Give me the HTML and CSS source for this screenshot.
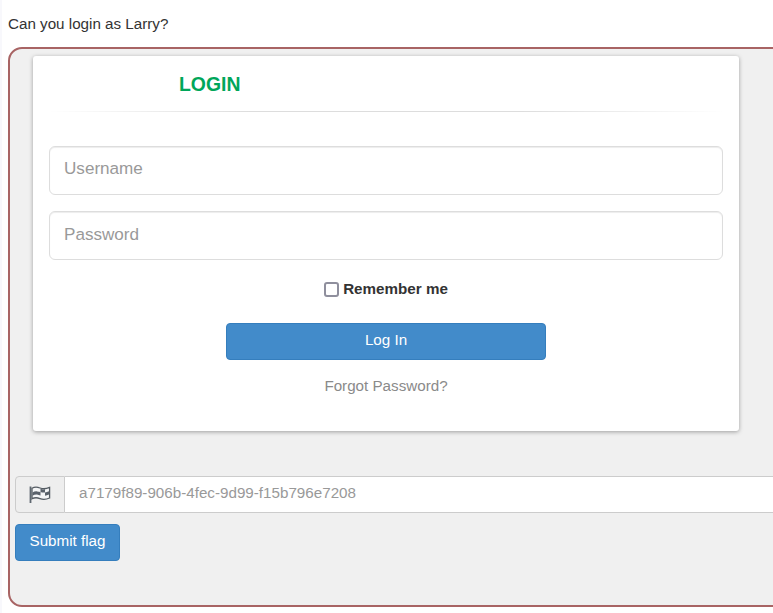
FILE: index.html
```html
<!DOCTYPE html>
<html lang="en">

<head>
    <meta charset="UTF-8">
    <meta name="viewport" content="width=device-width, initial-scale=1.0">
    <title>Can you login as Larry?</title>
    <link rel="stylesheet" href="styles.css">
</head>

<body>
    <p class="question">Can you login as Larry?</p>

    <div class="challenge">
        <div class="card">
            <div class="card-head">
                <h2 class="card-title">LOGIN</h2>
            </div>
            <form class="login-form">
                <input class="field" type="text" placeholder="Username">
                <input class="field field-password" type="password" placeholder="Password">
                <label class="remember"><span class="check"></span>Remember me</label>
                <button class="btn btn-login" type="button">Log In</button>
                <a class="forgot" href="#">Forgot Password?</a>
            </form>
        </div>

        <div class="flag-group">
            <span class="flag-addon">
                <svg class="flag-icon" viewBox="0 0 22 17" width="22" height="17">
                    <rect x="0.6" y="0.5" width="1.8" height="16.5" fill="#5f6870"></rect>
                    <path d="M3 2.2 C6 0.6 8.5 1 11 2 C14 3.2 17 3 20.6 1.4 L20.6 12 C17 13.6 14 13.8 11 12.6 C8.5 11.6 6 11.2 3 12.8 Z" fill="#f4f5f6" stroke="#555c63" stroke-width="1.3"></path>
                    <path d="M3.5 6.6 C5 5.6 6.5 5.2 8 5.4 L8 8.6 C6.5 8.4 5 8.8 3.5 9.8 Z M11.5 2.8 C13 3.4 14.5 3.5 16 3.3 L16 6.5 C14.5 6.7 13 6.6 11.5 6 Z M16 6.5 C17.3 6.3 18.7 5.8 20 5.2 L20 8.4 C18.7 9 17.3 9.5 16 9.7 Z M8 8.6 C9 8.8 10.3 9.2 11.5 9.6 L11.5 6 C10.3 5.6 9 5.4 8 5.4 Z" fill="#59616a"></path>
                </svg>
            </span>
            <input class="flag-input" type="text" placeholder="a7179f89-906b-4fec-9d99-f15b796e7208">
        </div>
        <button class="btn btn-submit" type="button">Submit flag</button>
    </div>
</body>

</html>
```
FILE: styles.css
```css
html,
body {
    height: 100%;
}

html {
    background-color: #f8f8fc;
}

body {
    margin: 0 0 0 2px;
    font-family: "Liberation Sans", Arial, sans-serif;
    font-size: 15.2px;
    line-height: 20px;
    color: #333;
    background-color: #fff;
    overflow: hidden;
}

.question {
    margin: 0;
    padding: 14px 0 13px 6px;
}

.challenge {
    box-sizing: border-box;
    width: 860px;
    height: 560px;
    margin-left: 6px;
    padding: 7px 5px 0;
    border: 2px solid #a86464;
    border-radius: 14px;
    background-color: #f0f0f0;
}

/* Login card */
.card {
    box-sizing: border-box;
    width: 706px;
    height: 375px;
    margin-left: 18px;
    border-radius: 3px;
    background-color: #fff;
    box-shadow: 0 1px 4px rgba(0, 0, 0, 0.35);
}

.card-head {
    height: 55px;
    margin: 0 16px;
    border-bottom: 1px solid;
    border-image: linear-gradient(to right, #fff, #ddd 30%, #ddd 70%, #fff) 1;
}

.card-title {
    margin: 0;
    padding: 16px 0 0 130px;
    font-size: 19.4px;
    line-height: 24px;
    font-weight: bold;
    color: #00a65a;
}

.login-form {
    display: flex;
    flex-direction: column;
    align-items: center;
    padding: 34px 16px 0;
}

.field {
    box-sizing: border-box;
    width: 100%;
    height: 49px;
    margin-bottom: 16px;
    padding: 0 14px 3px;
    border: 1px solid #ddd;
    border-radius: 6px;
    font-family: inherit;
    font-size: 17.1px;
    color: #555;
    box-shadow: inset 0 1px 1px rgba(0, 0, 0, 0.075);
}

.field-password {
    padding-bottom: 1px;
}

.field::placeholder,
.flag-input::placeholder {
    color: #999;
    opacity: 1;
}

.remember {
    display: flex;
    align-items: center;
    gap: 4px;
    margin: 2px 0 23px;
    font-size: 15.2px;
    line-height: 22px;
    font-weight: bold;
}

.check {
    box-sizing: border-box;
    width: 15px;
    height: 15px;
    border: 2px solid #8f8f9d;
    border-radius: 3px;
    background-color: #fff;
}

.btn {
    display: block;
    box-sizing: border-box;
    height: 37px;
    padding: 0 0 5px;
    border: 1px solid #357ebd;
    border-radius: 4px;
    background-color: #428bca;
    font-family: inherit;
    font-size: 15.2px;
    color: #fff;
}

.btn-login {
    width: 320px;
    margin-bottom: 15px;
}

.forgot {
    font-size: 15.2px;
    line-height: 22px;
    color: #8a8a8a;
    text-decoration: none;
}

/* Flag form */
.flag-group {
    display: flex;
    height: 37px;
    margin-top: 45px;
    margin-bottom: 11px;
}

.flag-addon {
    box-sizing: border-box;
    display: flex;
    align-items: center;
    justify-content: center;
    width: 50px;
    border: 1px solid #ccc;
    border-radius: 4px 0 0 4px;
    background-color: #eee;
}

.flag-input {
    flex: 1;
    box-sizing: border-box;
    padding: 0 14px 5px;
    border: 1px solid #ccc;
    border-left: 0;
    border-radius: 0 4px 4px 0;
    font-family: inherit;
    font-size: 15.2px;
    background-color: #fff;
}

.btn-submit {
    width: 105px;
}
```
